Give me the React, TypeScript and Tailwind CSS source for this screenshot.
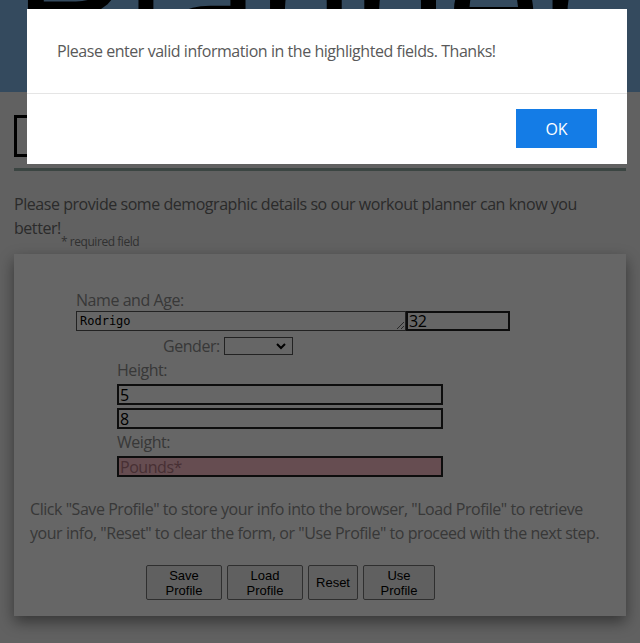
import React from 'react'

const sans = "font-['Open_Sans','Noto_Sans',sans-serif] tracking-[-0.45px]"

const App = () => {
  return (
    <div className={`relative min-h-[643px] bg-[#f2f2f2] ${sans} overflow-hidden`}>
      {/* Header */}
      <header className="h-[92px] bg-[#82b9eb] overflow-hidden">
        <h1 className="text-[170px] leading-none text-black font-['Liberation_Sans',sans-serif] pl-[14px] -mt-[84px] whitespace-nowrap">
          Planner
        </h1>
      </header>

      <main className="px-[14px]">
        {/* Title box */}
        <div className="mt-[23px] h-[42px] w-[300px] border-[3px] border-black"></div>
        <div className="mt-[11px] h-[3px] bg-[#94aca5]"></div>

        <p className="mt-[21px] text-[16px] leading-[24px] text-[#6b6b6b]">
          Please provide some demographic details so our workout planner can know you better!
        </p>
        <p className="-mt-[5px] pl-[47px] text-[12px] leading-[14px] text-[#7a7a7a]">* required field</p>

        {/* Form card */}
        <section className="mt-[5px] bg-white shadow-[0_6px_14px_rgba(0,0,0,0.45)] pt-[36px] pb-[16px]">
          <div className="pl-[62px]">
            <div className="text-[16px] leading-[21px] text-[#8c8c8c]">Name and Age:</div>
            <div className="flex">
              <textarea
                defaultValue="Rodrigo"
                rows={1}
                className="w-[330px] h-[20px] border border-[#555] px-[3px] py-0 font-['DejaVu_Sans_Mono','Liberation_Mono',monospace] tracking-normal text-[12px] leading-[18px] text-black resize"
              />
              <input
                defaultValue="32"
                className="w-[104px] h-[20px] border-2 border-[#222] px-[1px] text-[16px] leading-[16px] text-black outline-none"
              />
            </div>
          </div>

          <div className="pl-[149px] mt-[6px] flex items-center gap-[4px]">
            <span className="text-[16px] leading-[18px] text-[#8c8c8c]">Gender:</span>
            <div className="relative w-[69px] h-[18px] border border-[#555] bg-white">
              <svg className="absolute right-[6px] top-[5px]" width="10" height="7" viewBox="0 0 10 7">
                <path d="M1 1l4 4 4-4" fill="none" stroke="#000" strokeWidth="2" />
              </svg>
            </div>
          </div>

          <div className="pl-[103px] mt-[4px]">
            <div className="text-[16px] leading-[22px] text-[#8c8c8c]">Height:</div>
            <input
              defaultValue="5"
              className="mt-[3px] block w-[326px] h-[21px] border-2 border-[#222] px-[1px] text-[16px] leading-[16px] text-black outline-none"
            />
            <input
              defaultValue="8"
              className="mt-[3px] block w-[326px] h-[21px] border-2 border-[#222] px-[1px] text-[16px] leading-[16px] text-black outline-none"
            />
            <div className="mt-[2px] text-[16px] leading-[22px] text-[#8c8c8c]">Weight:</div>
            <input
              placeholder="Pounds*"
              className="mt-[3px] block w-[326px] h-[21px] border-2 border-[#222] bg-[#ffc0cb] px-[1px] text-[16px] leading-[16px] text-black placeholder:text-[#b37882] outline-none"
            />
          </div>

          <p className="mt-[20px] px-[16px] text-[16px] leading-[24px] text-[#8c8c8c]">
            Click "Save Profile" to store your info into the browser, "Load Profile" to retrieve your info, "Reset" to clear the form, or "Use Profile" to proceed with the next step.
          </p>

          <div className="mt-[20px] pl-[132px] flex gap-[5px] font-['Liberation_Sans',sans-serif] tracking-normal text-[13px] leading-[15px] text-black">
            <button className="w-[76px] h-[35px] bg-[#efefef] border border-[#767676] rounded-[2px]">Save<br />Profile</button>
            <button className="w-[76px] h-[35px] bg-[#efefef] border border-[#767676] rounded-[2px]">Load<br />Profile</button>
            <button className="w-[50px] h-[35px] bg-[#efefef] border border-[#767676] rounded-[2px]">Reset</button>
            <button className="w-[72px] h-[35px] bg-[#efefef] border border-[#767676] rounded-[2px]">Use<br />Profile</button>
          </div>
        </section>
      </main>

      {/* Alert overlay */}
      <div className="fixed inset-0 bg-black/60">
        <div className="ml-[27px] mt-[9px] w-[600px] bg-white">
          <div className="h-[84px] pl-[30px] pt-[31px] text-[16px] leading-[22px] text-[#595959]">
            Please enter valid information in the highlighted fields. Thanks!
          </div>
          <div className="border-t border-[#e5e5e5] h-[71px] flex justify-end items-start pt-[15px] pr-[30px]">
            <button className="w-[81px] h-[39px] bg-[#147ce6] text-white text-[16px] tracking-normal">OK</button>
          </div>
        </div>
      </div>
    </div>
  )
}

export default App
